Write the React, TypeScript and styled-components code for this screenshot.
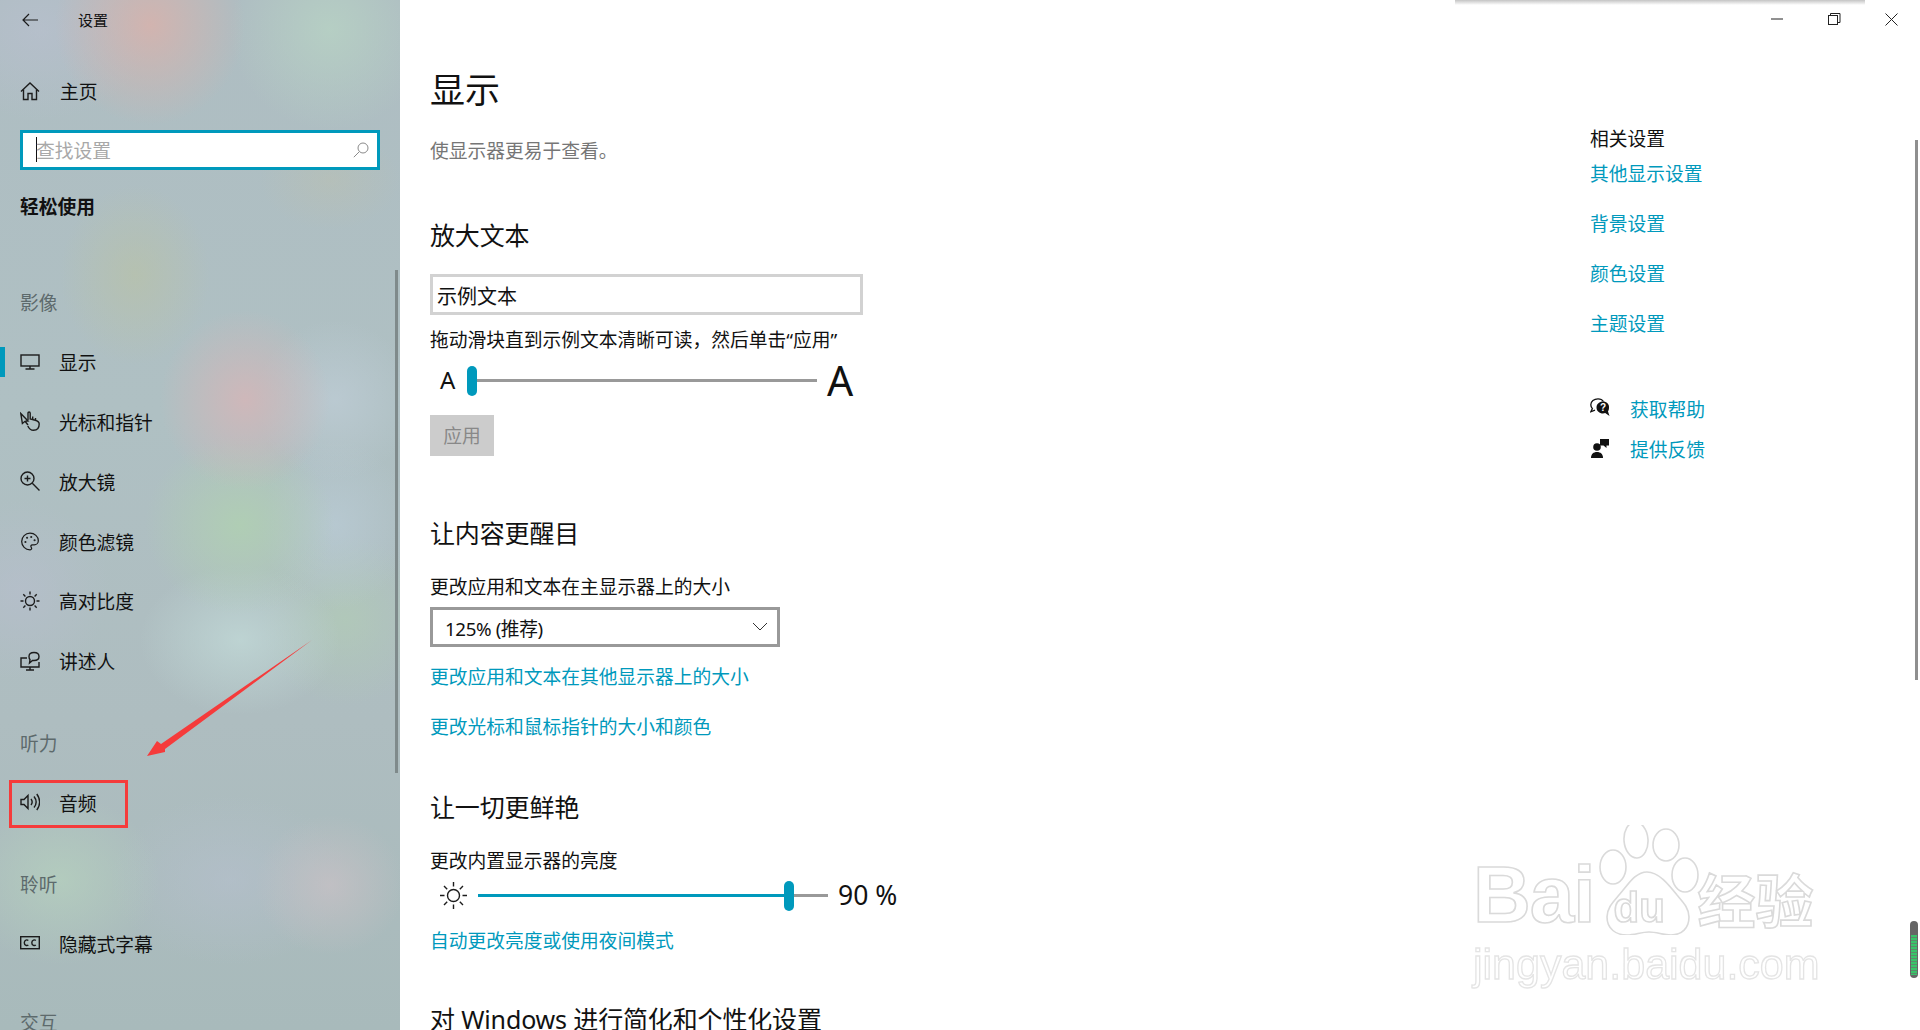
import styled, { createGlobalStyle } from "styled-components";
import { Palette } from "lucide-react";
import type { ReactNode } from "react";

// palette
const ACCENT = "#0099bc";
const INK = "#111";
const FONT = `"Noto Sans", "Noto Sans CJK SC", sans-serif`;

const Global = createGlobalStyle`
  html, body { margin: 0; padding: 0; height: 100%; overflow: hidden; background: #fff; }
  body { font-family: ${FONT}; color: ${INK}; }
  * { box-sizing: border-box; }
`;

const Shell = styled.div`
  position: relative;
  display: flex;
  width: 1920px;
  height: 1030px;
  overflow: hidden;
`;

// soft colour patch of the acrylic backdrop
const blob = (x: number, y: number, rx: number, ry: number, c: string, a: number) =>
  `radial-gradient(ellipse ${rx}px ${ry}px at ${x}px ${y}px, rgba(${c}, ${a}) 0%, rgba(${c}, ${a * 0.55}) 45%, rgba(${c}, 0) 100%)`;

// sidebar
const Sidebar = styled.aside`
  position: relative;
  width: 400px;
  height: 1030px;
  flex-shrink: 0;
  overflow: hidden;
  background:
    ${blob(150, 25, 95, 100, "216, 178, 172", 0.85)},
    ${blob(330, 30, 100, 100, "184, 212, 196", 0.75)},
    ${blob(135, 275, 75, 90, "186, 194, 164", 0.6)},
    ${blob(330, 180, 70, 50, "190, 192, 172", 0.4)},
    ${blob(245, 400, 85, 90, "212, 182, 184", 0.85)},
    ${blob(240, 525, 95, 90, "176, 208, 178", 0.85)},
    ${blob(335, 400, 80, 80, "192, 206, 216", 0.65)},
    ${blob(335, 525, 75, 85, "188, 206, 218", 0.6)},
    ${blob(240, 640, 100, 75, "194, 218, 216", 0.75)},
    ${blob(345, 620, 85, 85, "178, 206, 180", 0.6)},
    ${blob(330, 885, 75, 70, "196, 192, 196", 0.85)},
    ${blob(60, 880, 100, 85, "182, 210, 190", 0.7)},
    ${blob(230, 880, 120, 85, "182, 192, 206", 0.6)},
    ${blob(20, 590, 90, 90, "184, 190, 206", 0.6)},
    ${blob(40, 30, 110, 90, "186, 192, 208", 0.6)},
    linear-gradient(180deg, #aebdc2 0%, #afc0c3 40%, #aebdc0 70%, #a8babb 100%);
`;

const TitleRow = styled.div`
  display: flex;
  align-items: center;
  height: 40px;
  padding-left: 22px;
`;

const TitleText = styled.span`
  margin-left: 40px;
  font-size: 15px;
  line-height: 40px;
`;

const NavRow = styled.div<{ $mt?: number; $active?: boolean }>`
  position: relative;
  display: flex;
  align-items: center;
  height: 59.8px;
  margin-top: ${p => p.$mt ?? 0}px;
  padding-left: 20px;
  font-size: 18.75px;
  ${p => p.$active && `
    &::before {
      content: "";
      position: absolute;
      left: 0;
      top: 15px;
      width: 5px;
      height: 30px;
      background: ${ACCENT};
    }
  `}
`;

const NavIcon = styled.span<{ $gap?: number }>`
  display: flex;
  width: 20px;
  height: 20px;
  margin-right: ${p => p.$gap ?? 19}px;
`;

const SearchBox = styled.div`
  display: flex;
  align-items: center;
  width: 360px;
  height: 40px;
  margin: 9px 0 0 20px;
  padding: 0 8px 0 13px;
  border: 3px solid ${ACCENT};
  background: #fff;
`;

const Caret = styled.span`
  width: 1px;
  height: 25px;
  margin-right: -1px;
  background: #111;
`;

const Placeholder = styled.span`
  flex: 1;
  font-size: 18.75px;
  color: #a8a8a8;
`;

const CategoryTitle = styled.div`
  height: 40px;
  margin: 17px 0 0 20px;
  font-size: 18.75px;
  font-weight: 700;
  line-height: 40px;
`;

const GroupLabel = styled.div<{ $mt: number }>`
  height: 40px;
  margin: ${p => p.$mt}px 0 0 20px;
  font-size: 18.75px;
  line-height: 40px;
  color: #5d6a6c;
`;

const SideScroll = styled.div`
  position: absolute;
  left: 395px;
  top: 270px;
  width: 3px;
  height: 503px;
  background: #7f8a8b;
`;

const Highlight = styled.div`
  position: absolute;
  left: 9px;
  top: 780px;
  width: 119px;
  height: 48px;
  border: 3px solid #f53b3b;
`;

const ArrowMark = styled.svg`
  position: absolute;
  left: 0;
  top: 0;
  width: 400px;
  height: 1030px;
`;

// main area
const Main = styled.main`
  flex: 1;
  display: flex;
  flex-direction: column;
  min-width: 0;
  height: 1030px;
  background: #fff;
`;

const WindowBar = styled.div`
  display: flex;
  flex-shrink: 0;
  justify-content: flex-end;
  height: 40px;
`;

const WindowButton = styled.div`
  display: flex;
  align-items: flex-start;
  justify-content: center;
  width: 57px;
  padding-top: 13px;
`;

const Body = styled.div`
  flex: 1;
  display: flex;
  min-height: 0;
`;

const Content = styled.div`
  flex: 1;
  padding-left: 30px;
`;

const PageTitle = styled.h1`
  height: 60px;
  margin: 20px 0 0;
  font-size: 35px;
  font-weight: 400;
  line-height: 60px;
`;

const Subtitle = styled.p`
  height: 30px;
  margin: 16px 0 0;
  font-size: 18.75px;
  line-height: 30px;
  color: #767676;
`;

const Heading = styled.h2<{ $mt: number }>`
  height: 40px;
  margin: ${p => p.$mt}px 0 0;
  font-size: 25px;
  font-weight: 400;
  line-height: 40px;
  letter-spacing: -0.15px;
  white-space: nowrap;
`;

const SampleBox = styled.div`
  width: 433px;
  height: 41px;
  margin-top: 19px;
  padding-left: 4px;
  border: 3px solid #d2d2d2;
  font-size: 20px;
  line-height: 40px;
`;

const Label = styled.div<{ $mt: number }>`
  height: 30px;
  margin-top: ${p => p.$mt}px;
  font-size: 18.75px;
  line-height: 30px;
  white-space: nowrap;
`;

const SliderRow = styled.div<{ $mt: number }>`
  display: flex;
  align-items: center;
  height: 30px;
  margin-top: ${p => p.$mt}px;
  padding-left: 10px;
`;

const SmallA = styled.span`
  width: 27px;
  font-size: 24px;
  line-height: 30px;
`;

const BigA = styled.span`
  margin-left: 10px;
  font-size: 41px;
  line-height: 30px;
`;

const Track = styled.div`
  position: relative;
  width: 350px;
  height: 3px;
  background: #999;
`;

const TrackFill = styled.div`
  height: 3px;
  background: ${ACCENT};
`;

const Thumb = styled.div`
  position: absolute;
  top: -13px;
  width: 10px;
  height: 30px;
  border-radius: 5px;
  background: ${ACCENT};
`;

const SunSlot = styled.span`
  display: flex;
  width: 27px;
  height: 27px;
  margin-right: 11px;
`;

const Percent = styled.span`
  margin-left: 10px;
  font-size: 26.5px;
  line-height: 30px;
  white-space: pre;
`;

const ApplyButton = styled.div`
  width: 64px;
  height: 41px;
  margin-top: 20px;
  background: #ccc;
  color: #888;
  font-size: 18.75px;
  line-height: 41px;
  text-align: center;
`;

const Select = styled.div`
  display: flex;
  align-items: center;
  justify-content: space-between;
  width: 350px;
  height: 40px;
  margin-top: 5px;
  padding: 0 9px 0 12px;
  border: 3px solid #999;
  font-size: 18.75px;
  letter-spacing: -0.4px;
`;

const TextLink = styled.a<{ $mt: number }>`
  display: block;
  height: 30px;
  margin-top: ${p => p.$mt}px;
  color: ${ACCENT};
  font-size: 18.75px;
  line-height: 30px;
  white-space: nowrap;
`;

// right column
const Related = styled.div`
  width: 330px;
  flex-shrink: 0;
`;

const RelatedTitle = styled.div`
  height: 30px;
  margin-top: 84px;
  font-size: 18.75px;
  line-height: 30px;
`;

const HelpRow = styled.a<{ $mt: number }>`
  display: flex;
  align-items: center;
  height: 30px;
  margin-top: ${p => p.$mt}px;
  color: ${ACCENT};
  font-size: 18.75px;
`;

const HelpIcon = styled.span`
  display: flex;
  width: 20px;
  height: 20px;
  margin-right: 20px;
`;

// overlays at the window edges
const TopShadow = styled.div`
  position: absolute;
  left: 1455px;
  top: 0;
  width: 410px;
  height: 5px;
  background: linear-gradient(180deg, #c4c4c4, rgba(255, 255, 255, 0));
`;

const MainScroll = styled.div`
  position: absolute;
  left: 1915px;
  top: 140px;
  width: 3px;
  height: 540px;
  background: #8f8f8f;
`;

const Meter = styled.div`
  position: absolute;
  left: 1910px;
  top: 921px;
  width: 8px;
  height: 57px;
  padding: 14px 1px 3px;
  border-radius: 4px;
  background: #666;
`;

const MeterBars = styled.div`
  height: 100%;
  background: repeating-linear-gradient(180deg, #38c46a 0 2px, #5c8a6c 2px 3px);
`;

// watermark
const Watermark = styled.div`
  position: absolute;
  left: 1473px;
  top: 825px;
  width: 350px;
  opacity: 0.9;
  filter: blur(0.4px);
`;

const MarkTop = styled.div`
  display: flex;
  align-items: flex-end;
  height: 110px;
`;

const outline = `
  color: #fff;
  -webkit-text-stroke: 1.6px #d6d6d6;
  font-family: "Liberation Sans", sans-serif;
`;

const MarkBai = styled.span`
  ${outline}
  font-size: 80px;
  font-weight: 700;
  line-height: 80px;
  letter-spacing: -1px;
`;

const Paw = styled.div`
  position: relative;
  width: 104px;
  height: 110px;
  margin-left: 4px;
  flex-shrink: 0;
`;

const PawSvg = styled.svg`
  width: 104px;
  height: 110px;
`;

const MarkDu = styled.span`
  ${outline}
  position: absolute;
  left: 15px;
  top: 62px;
  font-size: 42px;
  font-weight: 700;
  line-height: 42px;
`;

const MarkJy = styled.span`
  ${outline}
  margin-left: -5px;
  font-family: "Noto Sans CJK SC", sans-serif;
  font-size: 58px;
  font-weight: 700;
  line-height: 74px;
  white-space: nowrap;
`;

const MarkDomain = styled.div`
  ${outline}
  -webkit-text-stroke: 1.3px #e2e2e2;
  margin-top: 4px;
  font-size: 43px;
  line-height: 50px;
  white-space: nowrap;
`;

// icons
const Ico = ({ children, size = 20 }: { children: ReactNode; size?: number }) => (
  <svg width={size} height={size} viewBox="0 0 20 20" fill="none" stroke="#1c1c1c" strokeWidth="1.4">
    {children}
  </svg>
);

const icons: Record<string, ReactNode> = {
  display: (
    <Ico>
      <rect x="1" y="3" width="18" height="11" />
      <path d="M10 14v3M5.5 17h9" />
    </Ico>
  ),
  pointer: (
    <Ico>
      <path d="M.8 2.500 8 10l-3 .3-2.600 2.200z" />
      <path d="M8 14 5 10.300M8 9V2.200c0-1.600 2.200-1.600 2.200 0V8l5 1.300c2.800.7 4 1.800 4 3.700 0 4-2.300 6.300-5.700 6.300-3 0-4.500-1.700-5.700-4.300" />
      <path d="M12.700 8.500V5.500M15.500 9V7" />
    </Ico>
  ),
  magnifier: (
    <Ico>
      <circle cx="7.500" cy="7.500" r="6.500" />
      <path d="M12.300 12.300 19.500 19.500M7.500 4.500v6M4.500 7.500h6" />
    </Ico>
  ),
  palette: <Palette size={21} strokeWidth={1.5} color="#1c1c1c" />,
  contrast: (
    <Ico>
      <circle cx="10" cy="10" r="4.500" />
      <path d="M10 .5v3M10 16.500v3M.5 10h3M16.500 10h3M3.300 3.300l2.100 2.100M14.600 14.600l2.100 2.100M16.700 3.300l-2.100 2.100M5.400 14.600l-2.100 2.100" />
    </Ico>
  ),
  narrator: (
    <Ico>
      <path d="M7 7H1v9h18v-5" />
      <path d="M10 16v3M6 19h8" />
      <path d="M9 5.500C9 3 11 1.500 14 1.500s5 1.500 5 4-2 4-5 4h-1.500L9.500 12l.5-3.500c-.7-.7-1-1.800-1-3z" />
    </Ico>
  ),
  audio: (
    <Ico>
      <path d="M1 7.500v5h3l4 4v-13l-4 4z" />
      <path d="M11 7c1.400 1.800 1.400 4.200 0 6M14 4.500c2.600 3.300 2.600 7.700 0 11M16.800 2c3.600 5 3.600 11 0 16" />
    </Ico>
  ),
  caption: (
    <Ico>
      <rect x=".7" y="3.700" width="18.600" height="12" strokeWidth="1.400" />
      <path d="M8.300 7.500c-1-1-4-.9-4 2.200s3 3.200 4 2.200M15.800 7.500c-1-1-4-.9-4 2.200s3 3.200 4 2.200" />
    </Ico>
  ),
};

const SearchGlass = () => (
  <svg width="16" height="16" viewBox="0 0 16 16" fill="none" stroke="#8a8a8a" strokeWidth="1">
    <circle cx="10" cy="6" r="5" />
    <path d="M6.300 9.700.8 15.200" />
  </svg>
);

const BackArrow = () => (
  <svg width="16" height="14" viewBox="0 0 16 14" fill="none" stroke="#1c1c1c" strokeWidth="1.200">
    <path d="M16 7H1M7 1 1 7l6 6" />
  </svg>
);

const HomeIcon = () => (
  <Ico>
    <path d="M1 10.500 10 2l9 8.500" />
    <path d="M3.500 8.500V18.500H8v-6h4v6h4.500V8.500" />
  </Ico>
);

const SunIcon = () => (
  <svg width="27" height="27" viewBox="0 0 27 27" fill="none" stroke="#1c1c1c" strokeWidth="1.400">
    <circle cx="13.500" cy="13.500" r="6" />
    <path d="M13.500 0v4.500M13.500 22.500V27M0 13.500h4.500M22.500 13.500H27M4 4l3.200 3.200M19.800 19.800 23 23M23 4l-3.200 3.200M7.200 19.800 4 23" />
  </svg>
);

const HelpBubble = () => (
  <svg width="20" height="20" viewBox="0 0 20 20">
    <path d="M8 .8C4 .8.8 3.200.8 6.800c0 1.500.6 2.800 1.600 3.800L.8 13.800l4.200-1.700" fill="none" stroke="#111" strokeWidth="1.300" />
    <path d="M8 .8c2.300 0 4.400 1 5.500 2.700" fill="none" stroke="#111" strokeWidth="1.300" />
    <path d="M13 3.500C9.500 3.500 6.500 6 6.500 9.500s3 6 6.500 6c.8 0 1.500-.1 2.200-.4l4.300 3-1.500-4.600c.7-1 1-2.200 1-3.500C19.500 6 16.500 3.500 13 3.500z" fill="#111" />
    <text x="13" y="13.300" fontSize="10" fontWeight="700" fill="#fff" textAnchor="middle" fontFamily="Liberation Sans">?</text>
  </svg>
);

const FeedbackIcon = () => (
  <svg width="20" height="20" viewBox="0 0 20 20" fill="#111">
    <circle cx="7" cy="9" r="3.800" />
    <path d="M1 20c0-4 2.500-6 6-6s6 2 6 6z" />
    <path d="M10 1h9v6.500h-2.500v2.500L13.500 7.500H10z" />
  </svg>
);

const MinimizeIcon = () => (
  <svg width="13" height="13" viewBox="0 0 13 13" stroke="#222" strokeWidth="1">
    <path d="M0 6h12" />
  </svg>
);

const RestoreIcon = () => (
  <svg width="13" height="13" viewBox="0 0 13 13" fill="none" stroke="#222" strokeWidth="1">
    <rect x=".5" y="2.500" width="9" height="9" />
    <path d="M2.500 2.500v-2h9.500v9h-2.500" />
  </svg>
);

const CloseIcon = () => (
  <svg width="13" height="13" viewBox="0 0 13 13" stroke="#222" strokeWidth="1">
    <path d="M.5.500l12 12M12.500.500l-12 12" />
  </svg>
);

const Chevron = () => (
  <svg width="16" height="10" viewBox="0 0 16 10" fill="none" stroke="#333" strokeWidth="1">
    <path d="M1 1l7 7 7-7" />
  </svg>
);

// data
const VISION = [
  { icon: "display", label: "显示", active: true },
  { icon: "pointer", label: "光标和指针" },
  { icon: "magnifier", label: "放大镜" },
  { icon: "palette", label: "颜色滤镜" },
  { icon: "contrast", label: "高对比度" },
  { icon: "narrator", label: "讲述人" },
];

const RELATED = [
  { label: "其他显示设置", mt: 5 },
  { label: "背景设置", mt: 20 },
  { label: "颜色设置", mt: 20 },
  { label: "主题设置", mt: 20 },
];

export default function App() {
  return (
    <Shell>
      <Global />
      <Sidebar>
        <TitleRow>
          <BackArrow />
          <TitleText>设置</TitleText>
        </TitleRow>
        <NavRow $mt={21}>
          <NavIcon $gap={20}><HomeIcon /></NavIcon>
          主页
        </NavRow>
        <SearchBox>
          <Caret />
          <Placeholder>查找设置</Placeholder>
          <SearchGlass />
        </SearchBox>
        <CategoryTitle>轻松使用</CategoryTitle>

        <GroupLabel $mt={56}>影像</GroupLabel>
        {VISION.map((item, i) => (
          <NavRow key={item.label} $mt={i === 0 ? 9 : 0} $active={item.active}>
            <NavIcon>{icons[item.icon]}</NavIcon>
            {item.label}
          </NavRow>
        ))}

        <GroupLabel $mt={33}>听力</GroupLabel>
        <NavRow $mt={9}>
          <NavIcon>{icons.audio}</NavIcon>
          音频
        </NavRow>

        <GroupLabel $mt={33}>聆听</GroupLabel>
        <NavRow $mt={8}>
          <NavIcon>{icons.caption}</NavIcon>
          隐藏式字幕
        </NavRow>

        <GroupLabel $mt={30}>交互</GroupLabel>

        <SideScroll />
        <Highlight />
        <ArrowMark viewBox="0 0 400 1030">
          <polygon points="312,640 161,744 157,741 147,756 165,752 165,749" fill="#f53b3b" />
        </ArrowMark>
      </Sidebar>

      <Main>
        <WindowBar>
          <WindowButton><MinimizeIcon /></WindowButton>
          <WindowButton><RestoreIcon /></WindowButton>
          <WindowButton><CloseIcon /></WindowButton>
        </WindowBar>
        <Body>
          <Content>
            <PageTitle>显示</PageTitle>
            <Subtitle>使显示器更易于查看。</Subtitle>

            <Heading $mt={49}>放大文本</Heading>
            <SampleBox>示例文本</SampleBox>
            <Label $mt={10}>拖动滑块直到示例文本清晰可读，然后单击“应用”</Label>
            <SliderRow $mt={10}>
              <SmallA>A</SmallA>
              <Track>
                <Thumb style={{ left: 0 }} />
              </Track>
              <BigA>A</BigA>
            </SliderRow>
            <ApplyButton>应用</ApplyButton>

            <Heading $mt={57}>让内容更醒目</Heading>
            <Label $mt={19}>更改应用和文本在主显示器上的大小</Label>
            <Select>
              125% (推荐)
              <Chevron />
            </Select>
            <TextLink $mt={15}>更改应用和文本在其他显示器上的大小</TextLink>
            <TextLink $mt={20}>更改光标和鼠标指针的大小和颜色</TextLink>

            <Heading $mt={45}>让一切更鲜艳</Heading>
            <Label $mt={19}>更改内置显示器的亮度</Label>
            <SliderRow $mt={4}>
              <SunSlot><SunIcon /></SunSlot>
              <Track>
                <TrackFill style={{ width: 306 }} />
                <Thumb style={{ left: 306 }} />
              </Track>
              <Percent>90 %</Percent>
            </SliderRow>
            <TextLink $mt={16}>自动更改亮度或使用夜间模式</TextLink>

            <Heading $mt={43}>对 Windows 进行简化和个性化设置</Heading>
          </Content>

          <Related>
            <RelatedTitle>相关设置</RelatedTitle>
            {RELATED.map(link => (
              <TextLink key={link.label} $mt={link.mt}>{link.label}</TextLink>
            ))}
            <HelpRow $mt={54}>
              <HelpIcon><HelpBubble /></HelpIcon>
              获取帮助
            </HelpRow>
            <HelpRow $mt={10}>
              <HelpIcon><FeedbackIcon /></HelpIcon>
              提供反馈
            </HelpRow>
          </Related>
        </Body>
      </Main>

      <TopShadow />
      <MainScroll />
      <Meter><MeterBars /></Meter>

      <Watermark>
        <MarkTop>
          <MarkBai>Bai</MarkBai>
          <Paw>
            <PawSvg viewBox="0 0 104 110" fill="#fff" stroke="#d6d6d6" strokeWidth="1.600">
              <ellipse cx="14" cy="42" rx="13" ry="17" />
              <ellipse cx="37" cy="15" rx="12" ry="18" transform="rotate(-4 37 15)" />
              <ellipse cx="67" cy="20" rx="13" ry="16" />
              <ellipse cx="86" cy="50" rx="13" ry="17" />
              <path d="M48 47C36 47 29 60 20 70c-6 7-12 13-12 22 0 12 9 18 20 18 8 0 14-3 22-3s14 3 22 3c11 0 18-7 18-18 0-9-6-15-12-22-8-10-18-23-30-23z" />
            </PawSvg>
            <MarkDu>du</MarkDu>
          </Paw>
          <MarkJy>经验</MarkJy>
        </MarkTop>
        <MarkDomain>jingyan.baidu.com</MarkDomain>
      </Watermark>
    </Shell>
  );
}
